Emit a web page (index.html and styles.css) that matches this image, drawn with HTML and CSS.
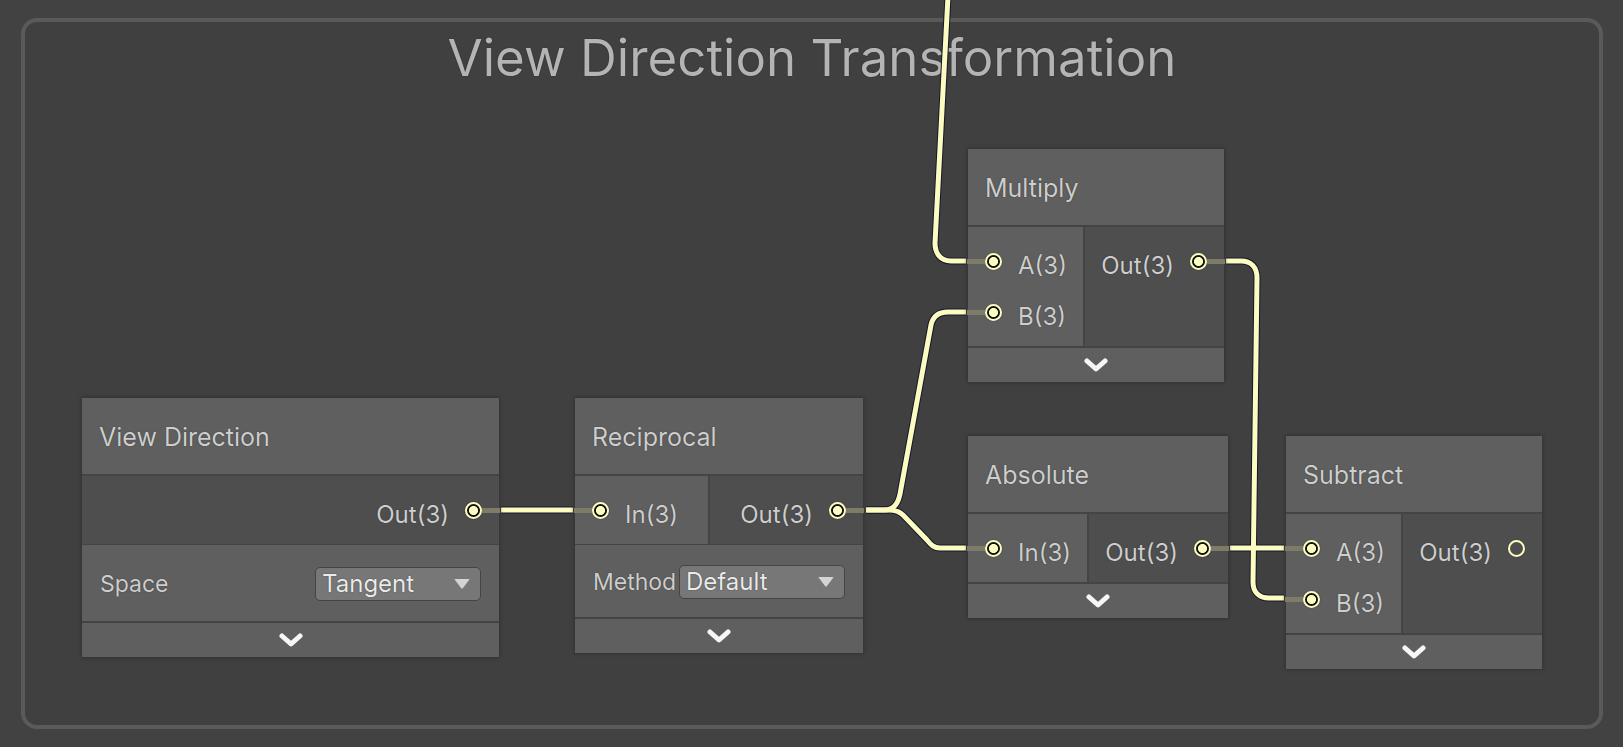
FILE: index.html
```html
<!DOCTYPE html>
<html lang="en">
<head>
<meta charset="utf-8">
<title>View Direction Transformation</title>
<link rel="stylesheet" href="styles.css">
</head>
<body>
<main class="graph">
  <section class="group">
    <h1 class="group-title">View Direction Transformation</h1>
  </section>

  <svg class="wires" aria-hidden="true">
    <defs>
      <g id="wire-paths">
        <path d="M948 -4L935 243C935 254 941 261 951 261H966"/>
        <path d="M501 510H573"/>
        <path d="M866 510H885C893 510 898 504 900 494L931 325C933 316 939 312 948 312H966"/>
        <path d="M866 510H889C895 510 899 511 903 515L927 540C931 545 934 548 940 548H966"/>
        <path d="M1226 261H1241C1251 261 1257 267 1257 278L1253 582C1253 592 1259 598 1269 598H1284"/>
        <path d="M1230 548H1284"/>
      </g>
    </defs>
    <use href="#wire-paths" class="wire-edge"/>
    <use href="#wire-paths" class="wire-line"/>
  </svg>

  <article class="node node-view">
    <h2 class="node-title">View Direction</h2>
    <div class="ports">
      <ul class="outputs">
        <li class="port">Out(3)<span class="dot linked"></span></li>
      </ul>
    </div>
    <div class="field field-wide">
      <label for="space">Space</label>
      <span class="dropdown">
        <select id="space"><option>Tangent</option><option>World</option></select>
        <svg class="arrow" viewBox="0 0 16 10" aria-hidden="true"><path d="M1 0H15Q16 0 15 1L9 9Q8 10 7 9L1 1Q0 0 1 0Z"/></svg>
      </span>
    </div>
    <button class="collapse" type="button" aria-label="Collapse View Direction"><svg class="chevron" viewBox="0 0 24 16" aria-hidden="true"><path d="M3 4L12 12L21 4"/></svg></button>
  </article>

  <article class="node node-reciprocal">
    <h2 class="node-title">Reciprocal</h2>
    <div class="ports">
      <ul class="inputs">
        <li class="port"><span class="dot linked"></span>In(3)</li>
      </ul>
      <ul class="outputs">
        <li class="port">Out(3)<span class="dot linked"></span></li>
      </ul>
    </div>
    <div class="field">
      <label for="method">Method</label>
      <span class="dropdown">
        <select id="method"><option>Default</option><option>Fast</option></select>
        <svg class="arrow" viewBox="0 0 16 10" aria-hidden="true"><path d="M1 0H15Q16 0 15 1L9 9Q8 10 7 9L1 1Q0 0 1 0Z"/></svg>
      </span>
    </div>
    <button class="collapse" type="button" aria-label="Collapse Reciprocal"><svg class="chevron" viewBox="0 0 24 16" aria-hidden="true"><path d="M3 4L12 12L21 4"/></svg></button>
  </article>

  <article class="node node-multiply">
    <h2 class="node-title">Multiply</h2>
    <div class="ports">
      <ul class="inputs">
        <li class="port"><span class="dot linked"></span>A(3)</li>
        <li class="port"><span class="dot linked"></span>B(3)</li>
      </ul>
      <ul class="outputs">
        <li class="port">Out(3)<span class="dot linked"></span></li>
      </ul>
    </div>
    <button class="collapse" type="button" aria-label="Collapse Multiply"><svg class="chevron" viewBox="0 0 24 16" aria-hidden="true"><path d="M3 4L12 12L21 4"/></svg></button>
  </article>

  <article class="node node-absolute">
    <h2 class="node-title">Absolute</h2>
    <div class="ports">
      <ul class="inputs">
        <li class="port"><span class="dot linked"></span>In(3)</li>
      </ul>
      <ul class="outputs">
        <li class="port">Out(3)<span class="dot linked"></span></li>
      </ul>
    </div>
    <button class="collapse" type="button" aria-label="Collapse Absolute"><svg class="chevron" viewBox="0 0 24 16" aria-hidden="true"><path d="M3 4L12 12L21 4"/></svg></button>
  </article>

  <article class="node node-subtract">
    <h2 class="node-title">Subtract</h2>
    <div class="ports">
      <ul class="inputs">
        <li class="port"><span class="dot linked"></span>A(3)</li>
        <li class="port"><span class="dot linked"></span>B(3)</li>
      </ul>
      <ul class="outputs">
        <li class="port">Out(3)<span class="dot"></span></li>
      </ul>
    </div>
    <button class="collapse" type="button" aria-label="Collapse Subtract"><svg class="chevron" viewBox="0 0 24 16" aria-hidden="true"><path d="M3 4L12 12L21 4"/></svg></button>
  </article>
</main>
</body>
</html>
```

FILE: styles.css
```css
* {
  box-sizing: border-box;
}

body {
  margin: 0;
  background: #424242;
  color: #cecece;
  font-family: Inter, "Liberation Sans", sans-serif;
  font-size: 24px;
  line-height: 30px;
}

.graph {
  position: relative;
  display: flex;
  min-height: 100vh;
  padding: 18px 20px 18px 21px;
  overflow: hidden;
}

.group {
  flex: 1;
  border: 4px solid #5a5a5a;
  border-radius: 16px;
  background: #404040;
}

.group-title {
  margin: 0;
  padding-top: 6px;
  color: #b4b4b4;
  font-size: 51px;
  font-weight: 400;
  line-height: 60px;
  text-align: center;
  text-shadow: 0 0 1px #111;
}

.wires {
  position: absolute;
  inset: 0;
  width: 100%;
  height: 100%;
  fill: none;
}

.wire-edge {
  stroke: #17172c;
  stroke-width: 7px;
}

.wire-line {
  stroke: #fcfcc0;
  stroke-width: 5px;
}

/* Nodes on the graph canvas */
.node {
  position: absolute;
  background: #444;
  box-shadow: 0 0 3px 1px #333;
  text-shadow: 0 0 1px #222;
}

.node-view {
  left: 82px;
  top: 398px;
  width: 417px;
}

.node-reciprocal {
  left: 575px;
  top: 398px;
  width: 288px;
}

.node-multiply {
  left: 968px;
  top: 149px;
  width: 256px;
}

.node-absolute {
  left: 968px;
  top: 436px;
  width: 260px;
}

.node-subtract {
  left: 1286px;
  top: 436px;
  width: 256px;
}

.node-title {
  margin: 0;
  padding: 24px 17px 22px;
  background: #5f5f5f;
  font-size: 25px;
  font-weight: 400;
}

.ports {
  display: flex;
  gap: 2px;
  padding-top: 2px;
}

.inputs,
.outputs {
  margin: 0;
  padding: 9px 16px 8px 17px;
  list-style: none;
}

.inputs {
  background: #5f5f5f;
}

.outputs {
  flex: 1;
  padding: 9px 17px 8px 16px;
  background: #4e4e4e;
}

.node-reciprocal .inputs {
  flex: 0 0 133px;
}

.port {
  display: flex;
  align-items: center;
  gap: 16px;
  height: 51px;
  padding-top: 8px;
}

.outputs .port {
  justify-content: flex-end;
}

/* Connector ring; its stub runs to the node edge */
.dot {
  position: relative;
  width: 17px;
  height: 17px;
  margin-top: -8px;
  border: 2px solid #fcfcc0;
  border-radius: 50%;
  box-shadow: 0 0 1px #17172c;
}

.linked {
  background: radial-gradient(circle closest-side, #fcfcc0 64%, #111 76%);
}

.linked::after {
  content: "";
  position: absolute;
  top: 4px;
  width: 18px;
  height: 5px;
  background: #7c7c68;
}

.inputs .linked::after {
  right: 15px;
}

.outputs .linked::after {
  left: 15px;
}

.field {
  display: flex;
  align-items: center;
  justify-content: space-between;
  margin-top: 1px;
  padding: 20px 18px 18px;
  background: #5f5f5f;
  font-size: 23px;
}

.field-wide {
  padding: 22px 18px 20px;
}

.dropdown {
  position: relative;
}

.dropdown select {
  display: block;
  width: 166px;
  height: 34px;
  padding: 0 6px;
  appearance: none;
  border: 1px solid #444;
  border-radius: 5px;
  background: #777;
  color: #ebebeb;
  font: inherit;
  font-size: 24px;
  text-shadow: inherit;
}

.arrow {
  position: absolute;
  top: 12px;
  right: 11px;
  width: 16px;
  height: 10px;
  fill: #d4d4d4;
}

.collapse {
  display: flex;
  align-items: center;
  justify-content: center;
  width: 100%;
  height: 34px;
  margin-top: 2px;
  padding: 0;
  border: 0;
  background: #5f5f5f;
}

.chevron {
  width: 24px;
  height: 16px;
  fill: none;
  stroke: #f6f6f6;
  stroke-width: 5px;
  stroke-linecap: round;
  stroke-linejoin: round;
}
```
